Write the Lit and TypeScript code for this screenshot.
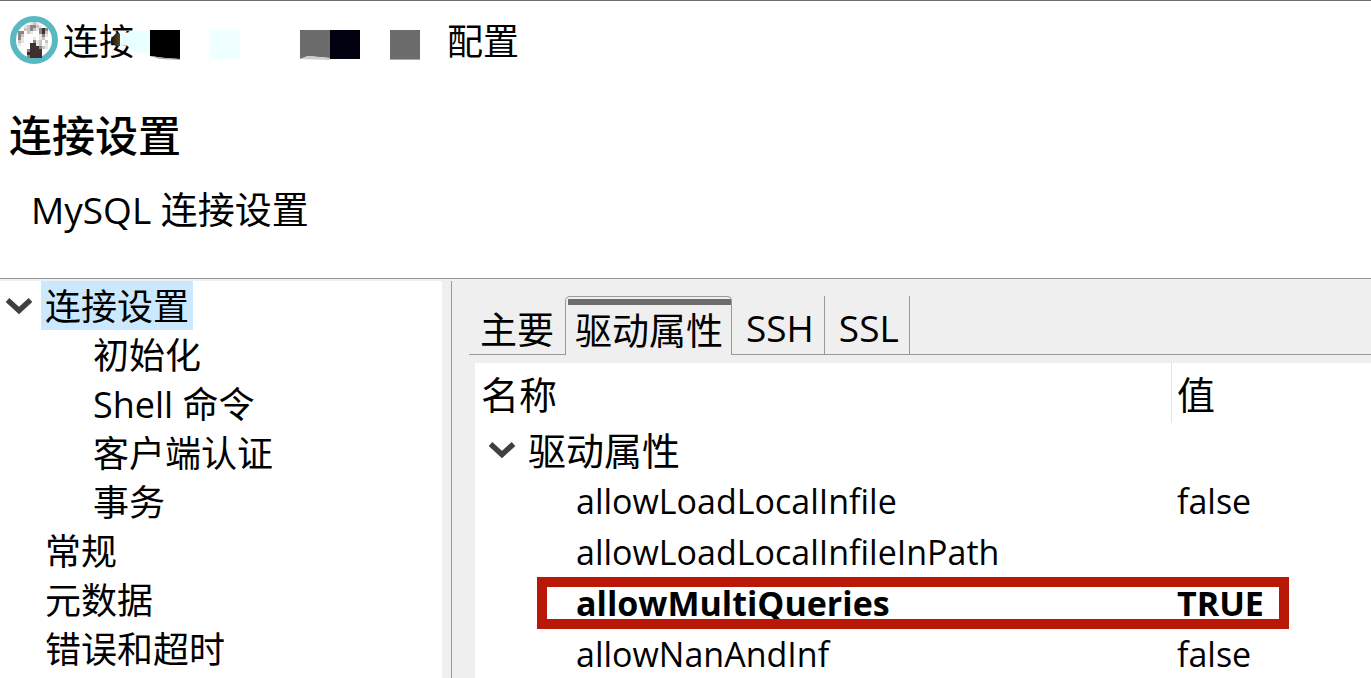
import { LitElement, html, css, svg } from "lit";
import { customElement, state } from "lit/decorators.js";

interface TreeNode {
  label: string;
  child?: boolean;
}

interface DriverProperty {
  name: string;
  value: string;
  changed?: boolean;
}

const NODES: TreeNode[] = [
  { label: "连接设置" },
  { label: "初始化", child: true },
  { label: "Shell 命令", child: true },
  { label: "客户端认证", child: true },
  { label: "事务", child: true },
  { label: "常规" },
  { label: "元数据" },
  { label: "错误和超时" },
];

const TABS = ["主要", "驱动属性", "SSH", "SSL"];

const PROPERTIES: DriverProperty[] = [
  { name: "allowLoadLocalInfile", value: "false" },
  { name: "allowLoadLocalInfileInPath", value: "" },
  { name: "allowMultiQueries", value: "TRUE", changed: true },
  { name: "allowNanAndInf", value: "false" },
];

const chevron = html`<svg class="chevron" viewBox="0 0 28 18" width="28" height="18" aria-hidden="true">
  <path d="M2.5 3 L14 13.5 L25.5 3" fill="none" stroke="#404040" stroke-width="5.4" />
</svg>`;

/* Mascot in a teal ring, drawn on a coarse pixel grid, one letter per shade. */
const SHADES: Record<string, string> = {
  d: "#3d302d",
  m: "#8c8583",
  l: "#c9c5c4",
  p: "#e6e4e4",
};
const FACE = [
  "....plp....",
  "..plmmlp...",
  "..llmlpmdm.",
  "mm.lp..mdl.",
  "ml.....pmp.",
  "mp...p.pl..",
  "lp...mpl.l.",
  "p...ddpl.p.",
  "....dddmlp.",
  "...mdddd...",
  "...ddddd...",
  "...mdddd...",
];

@customElement("app-root")
export class AppRoot extends LitElement {
  @state() private node = 0;
  @state() private tab = 1;

  static styles = css`
    :host {
      display: flex;
      flex-direction: column;
      box-sizing: border-box;
      height: 100vh;
      overflow: hidden;
      border-top: 1px solid #6e6a6e;
      background: #fff;
      color: #000;
      font-family: "Open Sans", "Noto Sans CJK SC", sans-serif;
      font-size: 36px;
      line-height: 48px;
    }
    button {
      margin: 0;
      border: 0;
      padding: 0;
      background: none;
      color: inherit;
      font: inherit;
      text-align: left;
      white-space: nowrap;
    }
    h1,
    p,
    ul {
      margin: 0;
      padding: 0;
      font-size: inherit;
      font-weight: 400;
    }
    ul {
      list-style: none;
    }
    .titlebar {
      display: flex;
      align-items: center;
      height: 48px;
      padding: 15px 10px 0;
    }
    .title {
      display: flex;
      position: relative;
      gap: 312px;
      padding: 4px 0 0 5px;
    }
    .masks {
      position: absolute;
      left: 52px;
      top: 10px;
    }
    .header {
      flex: none;
      padding: 40px 9px 44px;
    }
    .heading {
      font-size: 43px;
      font-weight: 500;
      line-height: 64px;
    }
    .subtitle {
      padding: 18px 22px 0;
      font-size: 37px;
    }
    .body {
      display: flex;
      flex: 1;
      min-height: 0;
      border-top: 1px solid #999;
      background: #efefef;
    }
    .tree {
      flex: none;
      width: 442px;
      margin: 2px 9px 0 0;
      background: #fff;
    }
    .row {
      display: flex;
      align-items: center;
      height: 49px;
      padding-left: 5px;
    }
    .row.child {
      padding-left: 89px;
    }
    .toggle {
      display: flex;
      width: 36px;
    }
    .item {
      height: 49px;
      padding: 2px 4px 0;
    }
    .item.selected {
      background: #cce8ff;
    }
    .page {
      flex: 1;
      min-width: 0;
      margin-top: 2px;
      border-left: 1px solid #999;
      padding: 15px 0 0 17px;
    }
    .tabs {
      display: flex;
      height: 59px;
      font-size: 37px;
    }
    .tabs::after {
      content: "";
      flex: 1;
      border-bottom: 1px solid #999;
    }
    .tab {
      box-sizing: border-box;
      border-right: 1px solid #999;
      border-bottom: 1px solid #999;
      padding: 6px 10px 0 14px;
    }
    .tab:first-child {
      border-right: 0;
      padding: 10px 11px 0;
    }
    .tab.active {
      border: 1px solid #999;
      border-bottom: 0;
      border-radius: 5px 5px 0 0;
      padding: 4px 8px 0 9px;
      background: linear-gradient(#6b6e6d, #6b6e6d) 2px 2px / 100% 6px no-repeat;
      line-height: 60px;
    }
    .panel {
      margin: 8px 0 0 6px;
      background: #fff;
    }
    table {
      width: 100%;
      table-layout: fixed;
      border-collapse: collapse;
      font-size: 34px;
    }
    th,
    td {
      height: 51px;
      padding: 0 6px;
      font-weight: 400;
      text-align: left;
      white-space: nowrap;
    }
    thead th {
      height: 61px;
      font-size: 38px;
      background: linear-gradient(#e5e5e5, #e5e5e5) 0 0 / 0 60px no-repeat;
    }
    thead .value {
      width: 188px;
      background-size: 1px 60px;
    }
    .group {
      font-size: 38px;
    }
    .group-label {
      display: flex;
      align-items: center;
      gap: 12px;
      padding-left: 7px;
    }
    .property {
      position: relative;
    }
    .property th {
      padding-left: 101px;
    }
    .property.changed th,
    .property.changed td {
      font-weight: 700;
    }
    .frame {
      position: absolute;
      inset: 0 82px -1px 62px;
      border: 10px solid #b91807;
    }
  `;

  private logo() {
    return html`<svg width="48" height="48" viewBox="0 0 48 48" aria-hidden="true">
      <circle cx="24" cy="24" r="21" fill="#fff" stroke="#58b9c3" stroke-width="6" />
      <g shape-rendering="crispEdges">
        ${FACE.flatMap((line, y) =>
          [...line].map((c, x) =>
            SHADES[c]
              ? svg`<rect x=${8 + x * 3} y=${6 + y * 3} width="3" height="3" fill=${SHADES[c]} />`
              : ""
          )
        )}
      </g>
    </svg>`;
  }

  private masks() {
    return html`<svg class="masks" width="310" height="40" viewBox="0 0 310 40" aria-hidden="true">
      <defs>
        <linearGradient id="fade" x1="0" x2="1" y1="0" y2="0">
          <stop offset="0" stop-color="#e6ffff" />
          <stop offset="1" stop-color="#ecffff" />
        </linearGradient>
        <linearGradient id="brown" x1="0" x2="1" y1="0" y2="0">
          <stop offset="0" stop-color="#1c140a" />
          <stop offset="1" stop-color="#5c4526" />
        </linearGradient>
      </defs>
      <path d="M10 10 L20 8 L40 6 V32 L24 27 L16 21 L10 22Z" fill="url(#fade)" />
      <path d="M1 15 L6 9 L10 10 V22 L6 22 L1 19Z" fill="url(#brown)" />
      <path d="M40 6 H70 V35 L55 34 L40 32Z" fill="#000" />
      <path d="M40 32 L55 34 L70 35 V36 L50 35Z" fill="#aaa" />
      <rect x="100" y="6" width="30" height="29" fill="#f0ffff" />
      <path d="M190 6 H220 V34 L198 32 L190 35Z" fill="#6c6c6c" />
      <path d="M190 35 L198 32 L220 34 V36Z" fill="#ccc" />
      <rect x="220" y="6" width="30" height="29" fill="#01010f" />
      <rect x="280" y="6" width="30" height="29" fill="#6c6c6c" />
      <rect x="280" y="35" width="30" height="1" fill="#aaa" />
    </svg>`;
  }

  render() {
    return html`
      <header class="titlebar">
        ${this.logo()}
        <div class="title"><span>连接</span><span>配置</span>${this.masks()}</div>
      </header>
      <section class="header">
        <h1 class="heading">连接设置</h1>
        <p class="subtitle">MySQL 连接设置</p>
      </section>
      <main class="body">
        <ul class="tree">
          ${NODES.map(
            (n, i) => html`<li class="row ${n.child ? "child" : ""}">
              ${n.child
                ? ""
                : i === 0
                  ? html`<button class="toggle" aria-label="连接设置" aria-expanded="true">${chevron}</button>`
                  : html`<span class="toggle"></span>`}
              <button class="item ${i === this.node ? "selected" : ""}" @click=${() => (this.node = i)}>${n.label}</button>
            </li>`
          )}
        </ul>
        <section class="page">
          <div class="tabs" role="tablist">
            ${TABS.map(
              (t, i) => html`<button
                class="tab ${i === this.tab ? "active" : ""}"
                role="tab"
                aria-selected=${i === this.tab}
                @click=${() => (this.tab = i)}
              >${t}</button>`
            )}
          </div>
          <div class="panel">
            <table>
              <thead>
                <tr><th scope="col">名称</th><th class="value" scope="col">值</th></tr>
              </thead>
              <tbody>
                <tr>
                  <th class="group" scope="rowgroup" colspan="2">
                    <div class="group-label">${chevron}<span>驱动属性</span></div>
                  </th>
                </tr>
                ${PROPERTIES.map(
                  (p) => html`<tr class="property ${p.changed ? "changed" : ""}">
                    <th scope="row">${p.name}</th>
                    <td>${p.value}${p.changed ? html`<span class="frame"></span>` : ""}</td>
                  </tr>`
                )}
              </tbody>
            </table>
          </div>
        </section>
      </main>
    `;
  }
}
